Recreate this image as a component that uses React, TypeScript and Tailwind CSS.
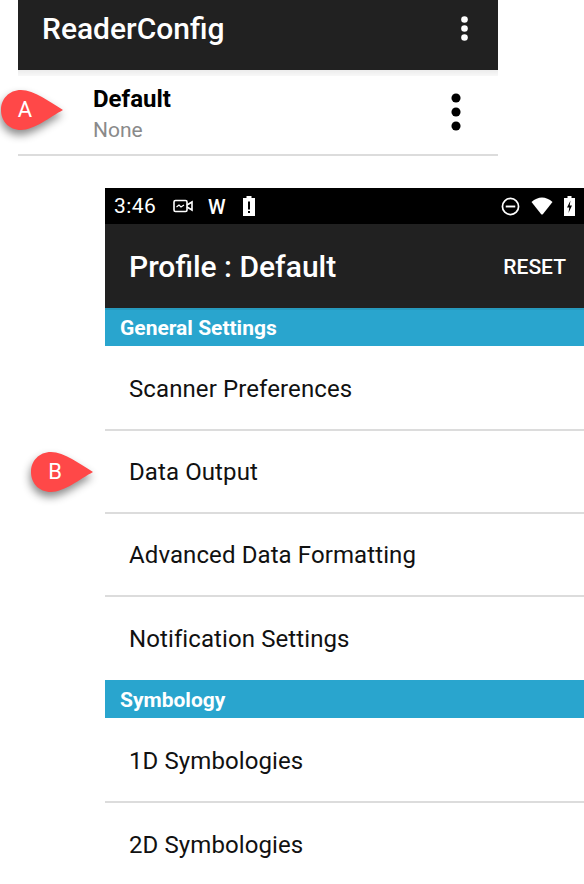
import React from 'react';

const Dots = ({ className, r }: { className: string; r: number }) => (
  <svg viewBox="0 0 12 36" className={className} fill="currentColor">
    <circle cx="6" cy="6" r={r} />
    <circle cx="6" cy="18" r={r} />
    <circle cx="6" cy="30" r={r} />
  </svg>
);

const Callout = ({ label, className }: { label: string; className: string }) => (
  <div className={`absolute w-[66px] h-[46px] ${className}`}>
    <svg viewBox="0 0 66 46" className="absolute inset-0 w-full h-full drop-shadow-[-1px_5px_4px_rgba(0,0,0,0.45)]">
      <path d="M21 2 C34 2 50 14 63 22 C50 29 34 42 21 42 C9 42 1 33 1 22 C1 11 9 2 21 2 Z" fill="#ff4848" />
    </svg>
    <span className="absolute left-[15px] top-[10px] w-[20px] text-center text-[22px] leading-[24px] text-white font-['Roboto',sans-serif]">
      {label}
    </span>
  </div>
);

const Row = ({ label, last }: { label: string; last?: boolean }) => (
  <div className={`h-[83px] pt-[1px] flex items-center pl-[24px] text-[24px] tracking-[0.1px] text-[#111111] ${last ? '' : 'border-b-2 border-[#dcdcdc]'}`}>
    {label}
  </div>
);

const SectionHeader = ({ label, className }: { label: string; className?: string }) => (
  <div className={`h-[38px] mb-[2px] pt-[4px] bg-[#29a5ce] flex items-center pl-[15px] text-[21px] font-bold text-white ${className ?? ''}`}>{label}</div>
);

export default function App() {
  return (
    <div className="relative w-[584px] h-[884px] bg-white overflow-hidden font-['Roboto',sans-serif]">
      <div className="ml-[18px] w-[480px]">
        <div className="h-[70px] bg-[#212121] flex items-start justify-between pl-[24px] pr-[29px] text-white">
          <span className="mt-[10px] text-[30px] leading-[38px] font-medium">ReaderConfig</span>
          <Dots r={4.4} className="mt-[15px] w-[9px] h-[27px]" />
        </div>
        <div className="h-[6px] bg-gradient-to-b from-[#ececec] to-[#f8f8f8]" />
        <div className="h-[80px] border-b-2 border-[#dcdcdc] flex items-start justify-between pl-[75px] pr-[35px]">
          <div>
            <div className="mt-[9px] text-[24px] leading-[28px] font-bold text-black">Default</div>
            <div className="mt-[3px] text-[21px] leading-[28px] text-[#8a8a8a]">None</div>
          </div>
          <Dots r={3.9} className="mt-[15px] w-[14px] h-[42px] text-black" />
        </div>
      </div>

      <div className="mt-[32px] ml-[105px] w-[479px]">
        <div className="h-[36px] bg-black flex items-center justify-between pl-[9px] pr-[9px] text-white">
          <div className="flex items-center">
            <span className="text-[21px] leading-[24px] tracking-[0.4px]">3:46</span>
            <svg viewBox="0 0 20 14" className="ml-[17px] w-[20px] h-[14px]" fill="none" stroke="currentColor">
              <rect x="1" y="1.5" width="13" height="11" rx="1.5" strokeWidth="1.6" />
              <path d="M14 6 L19 3 V11 L14 8" strokeWidth="1.6" />
              <path d="M3.5 8 L6 6 L8 8 L11 6" strokeWidth="1.2" />
            </svg>
            <span className="ml-[15px] mt-[2px] text-[20px] leading-[20px] font-medium">W</span>
            <svg viewBox="0 0 14 22" className="ml-[16px] w-[14px] h-[22px]">
              <path d="M4.5 1 H9.5 V3 H13 V21 H1 V3 H4.5 Z" fill="#fff" />
              <rect x="6" y="6.5" width="2" height="8" fill="#000" />
              <rect x="6" y="16" width="2" height="2" fill="#000" />
            </svg>
          </div>
          <div className="flex items-center">
            <svg viewBox="0 0 20 20" className="w-[19px] h-[19px]" fill="none" stroke="#fff">
              <circle cx="10" cy="10" r="8.5" strokeWidth="1.8" />
              <rect x="5" y="9" width="10" height="2" fill="#fff" stroke="none" />
            </svg>
            <svg viewBox="0 0 22 18" className="ml-[11px] w-[22px] h-[18px]">
              <path d="M0.5 5 C7 -1 15 -1 21.5 5 L12 17 Q11 18 10 17 Z" fill="#fff" />
            </svg>
            <svg viewBox="0 0 11 20" className="ml-[11px] w-[11px] h-[20px]">
              <path d="M3.5 0 H7.5 V2 H11 V20 H0 V2 H3.5 Z" fill="#fff" />
              <path d="M6.5 4.5 L3 11.5 H5.3 L4.5 17 L8 9.5 H5.7 Z" fill="#000" />
            </svg>
          </div>
        </div>
        <div className="h-[84px] pt-[2px] bg-[#212121] flex items-center justify-between pl-[24px] pr-[18px] text-white">
          <span className="text-[30px] leading-[38px] font-medium">Profile : Default</span>
          <span className="text-[21px] leading-[24px] font-medium">RESET</span>
        </div>
        <SectionHeader label="General Settings" className="shadow-[inset_0_2px_0_#2699bd]" />
        <Row label="Scanner Preferences" />
        <Row label="Data Output" />
        <Row label="Advanced Data Formatting" />
        <Row label="Notification Settings" last />
        <SectionHeader label="Symbology" />
        <Row label="1D Symbologies" />
        <Row label="2D Symbologies" last />
      </div>

      <Callout label="A" className="left-[0px] top-[88px]" />
      <Callout label="B" className="left-[30px] top-[450px]" />
    </div>
  );
}
